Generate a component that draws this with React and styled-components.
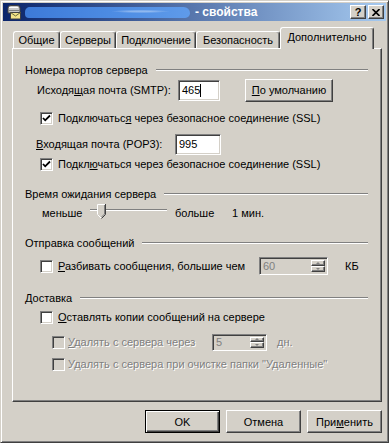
import React from 'react';
import styled, {createGlobalStyle, css} from 'styled-components';

const face = '#d4d0c8';

const Global = createGlobalStyle`
  html, body { margin: 0; padding: 0; background: ${face}; }
  body {
    font-family: "Liberation Sans", Arial, sans-serif;
    font-size: 11px;
    color: #000;
  }
`;

const raised = css`
  border: 1px solid;
  border-color: #fff #404040 #404040 #fff;
  box-shadow: inset -1px -1px #808080, inset 1px 1px ${face};
`;

const sunken = css`
  border: 1px solid;
  border-color: #808080 #fff #fff #808080;
  box-shadow: inset 1px 1px #404040, inset -1px -1px ${face};
`;

const Window = styled.div`
  width: 389px;
  height: 443px;
  box-sizing: border-box;
  background: ${face};
  border: 1px solid;
  border-color: ${face} #404040 #404040 ${face};
  box-shadow: inset 1px 1px #fff, inset -1px -1px #808080;
  padding: 2px;
  display: flex;
  flex-direction: column;
`;

const TitleBar = styled.div`
  height: 18px;
  display: flex;
  align-items: center;
  padding: 0 2px 0 3px;
  background: linear-gradient(to right, #0a246a, #a6caf0);
`;

const Smudge = styled.div`
  width: 165px;
  height: 11px;
  margin-left: 3px;
  border-radius: 6px 8px 6px 5px;
  background:
    radial-gradient(ellipse at 70% 40%, rgba(255,255,255,0.35) 0 6%, transparent 18%),
    linear-gradient(to right, #3d7ad8, #4f8ee4 60%, #5f9bea);
`;

const TitleText = styled.span`
  margin-left: 5px;
  color: #fff;
  font-weight: bold;
  font-size: 12px;
`;

const CapButtons = styled.div`
  margin-left: auto;
  display: flex;
  gap: 2px;
`;

const CapBtn = styled.div`
  ${raised};
  box-sizing: border-box;
  width: 16px;
  height: 14px;
  background: ${face};
  display: flex;
  align-items: center;
  justify-content: center;
  font-weight: bold;
  font-size: 11px;
  line-height: 1;
`;

const Body = styled.div`
  flex: 1;
  display: flex;
  flex-direction: column;
  padding: 6px 4px 0 9px;
`;

const Tabs = styled.div`
  display: flex;
  align-items: flex-end;
  height: 21px;
  padding-left: 1px;
  position: relative;
  z-index: 1;
`;

const Tab = styled.div`
  box-sizing: border-box;
  width: ${p => p.w}px;
  height: ${p => (p.$active ? 22 : 17)}px;
  margin-bottom: ${p => (p.$active ? -1 : 0)}px;
  background: ${face};
  border-top: 1px solid #fff;
  border-left: 1px solid #fff;
  border-right: 1px solid #404040;
  box-shadow: inset -1px 0 #808080;
  border-radius: 3px 3px 0 0;
  display: flex;
  justify-content: center;
  padding-top: ${p => (p.$active ? 3 : 2)}px;
`;

const Panel = styled.div`
  box-sizing: border-box;
  height: 354px;
  border: 1px solid;
  border-color: #fff #404040 #404040 #fff;
  box-shadow: inset -1px -1px #808080;
  padding: 11px 13px 0 12px;
  display: flex;
  flex-direction: column;
`;

const Row = styled.div`
  display: flex;
  align-items: center;
  height: ${p => p.h || 20}px;
  margin-top: ${p => p.mt || 0}px;
  padding-left: ${p => p.indent || 0}px;
  white-space: nowrap;
`;

const Rule = styled.div`
  flex: 1;
  margin-left: 8px;
  border-top: 1px solid #808080;
  border-bottom: 1px solid #fff;
`;

const Label = styled.span`
  display: inline-block;
  width: ${p => (p.w ? `${p.w}px` : 'auto')};
  margin-left: ${p => p.ml || 0}px;
  color: ${p => (p.$off ? '#808080' : '#000')};
  text-shadow: ${p => (p.$off ? '1px 1px #fff' : 'none')};
`;

const U = styled.u`
  text-underline-offset: 1px;
`;

const Field = styled.div`
  ${sunken};
  box-sizing: border-box;
  width: ${p => p.w}px;
  height: ${p => p.h}px;
  background: #fff;
  display: flex;
  align-items: center;
  padding-left: 3px;
`;

const Caret = styled.span`
  display: inline-block;
  width: 1px;
  height: 13px;
  background: #000;
`;

const Button = styled.div`
  box-sizing: border-box;
  width: ${p => p.w || 75}px;
  height: ${p => p.h || 23}px;
  margin-left: ${p => p.ml || 0}px;
  background: ${face};
  display: flex;
  align-items: center;
  justify-content: center;
  ${p => p.$default ? css`
    border: 1px solid #000;
    box-shadow: inset 1px 1px #fff, inset -1px -1px #404040, inset -2px -2px #808080;
  ` : raised}
`;

const Box = styled.span`
  ${sunken};
  box-sizing: border-box;
  width: 13px;
  height: 13px;
  flex: none;
  background: ${p => (p.$off ? face : '#fff')};
  display: flex;
  align-items: center;
  justify-content: center;
`;

const Spin = styled.div`
  ${sunken};
  box-sizing: border-box;
  width: ${p => p.w}px;
  height: ${p => p.h}px;
  margin-left: ${p => p.ml || 0}px;
  background: ${face};
  display: flex;
  align-items: stretch;
  padding: 2px;
  color: #808080;
`;

const SpinValue = styled.span`
  flex: 1;
  display: flex;
  align-items: center;
  padding-left: 1px;
`;

const UpDown = styled.div`
  width: 14px;
  display: flex;
  flex-direction: column;
`;

const Arrow = styled.div`
  ${raised};
  box-sizing: border-box;
  flex: 1;
  display: flex;
  align-items: center;
  justify-content: center;
  &::after {
    content: '';
    border-left: 2px solid transparent;
    border-right: 2px solid transparent;
    ${p => p.$down
      ? 'border-top: 2px solid #808080;'
      : 'border-bottom: 2px solid #808080;'}
  }
`;

const Slider = styled.div`
  position: relative;
  width: 77px;
  height: 18px;
  margin-left: ${p => p.ml || 0}px;
`;

const Track = styled.div`
  margin-top: 5px;
  height: 2px;
  border-top: 1px solid #808080;
  border-bottom: 1px solid #fff;
  background: #404040;
  box-sizing: border-box;
`;

const Thumb = styled.svg`
  position: absolute;
  left: 7px;
  top: 0;
`;

const Footer = styled.div`
  display: flex;
  justify-content: flex-end;
  gap: 6px;
  margin-top: 8px;
`;

function Check({on, off}) {
  return (
    <Box $off={off}>
      {on && (
        <svg width="9" height="9" viewBox="0 0 9 9">
          <path d="M1 4 L3.2 6.3 L8 1.5" fill="none" stroke="#000" strokeWidth="1.8" />
        </svg>
      )}
    </Box>
  );
}

function GroupTitle({children, mt}) {
  return (
    <Row mt={mt}>
      <span>{children}</span>
      <Rule />
    </Row>
  );
}

function SpinBox({value, w, h, ml}) {
  return (
    <Spin w={w} h={h} ml={ml}>
      <SpinValue>{value}</SpinValue>
      <UpDown>
        <Arrow />
        <Arrow $down />
      </UpDown>
    </Spin>
  );
}

function AppIcon() {
  return (
    <svg width="16" height="16" viewBox="0 0 16 16">
      <path d="M2 4 Q2 1.5 5 1.5 H11 Q14 1.5 14 4 V9 H2 Z" fill="#c8c8c8" stroke="#404040" />
      <path d="M3 3.5 H12" stroke="#fff" />
      <path d="M2.5 6.5 H13.5" stroke="#808080" />
      <rect x="4.5" y="8.5" width="10" height="6.5" fill="#f3e38a" stroke="#404040" />
      <path d="M4.5 8.5 L9.5 12 L14.5 8.5" fill="none" stroke="#6b6b3a" />
    </svg>
  );
}

export default function App() {
  return (
    <>
      <Global />
      <Window>
        <TitleBar>
          <AppIcon />
          <Smudge />
          <TitleText>- свойства</TitleText>
          <CapButtons>
            <CapBtn>?</CapBtn>
            <CapBtn>
              <svg width="8" height="7" viewBox="0 0 8 7">
                <path d="M0.5 0 L7.5 7 M7.5 0 L0.5 7" stroke="#000" strokeWidth="1.6" />
              </svg>
            </CapBtn>
          </CapButtons>
        </TitleBar>
        <Body>
          <Tabs>
            <Tab w={47}>Общие</Tab>
            <Tab w={56}>Серверы</Tab>
            <Tab w={80}>Подключение</Tab>
            <Tab w={84}>Безопасность</Tab>
            <Tab w={94} $active>Дополнительно</Tab>
          </Tabs>
          <Panel>
            <GroupTitle>Номера портов сервера</GroupTitle>
            <Row indent={12}>
              <Label w={141}>Исходя<U>щ</U>ая почта (SMTP):</Label>
              <Field w={42} h={21}>465<Caret /></Field>
              <Button w={88} h={23} ml={25}><span><U>П</U>о умолчанию</span></Button>
            </Row>
            <Row indent={15} mt={8}>
              <Check on />
              <Label ml={5}>Подключатьс<U>я</U> через безопасное соединение (SSL)</Label>
            </Row>
            <Row indent={11} mt={6}>
              <Label w={139}><U>В</U>ходящая почта (POP3):</Label>
              <Field w={46} h={21}>995</Field>
            </Row>
            <Row indent={15}>
              <Check on />
              <Label ml={5}>Подкл<U>ю</U>чаться через безопасное соединение (SSL)</Label>
            </Row>

            <GroupTitle mt={10}>Время ожидания сервера</GroupTitle>
            <Row indent={17} h={18}>
              <Label w={48}>меньше</Label>
              <Slider>
                <Track />
                <Thumb width="9" height="15" viewBox="0 0 9 15">
                  <path d="M0 0 H8 V10 L4 14 L0 10 Z" fill={face} />
                  <path d="M0.5 10.5 V0.5 H8" fill="none" stroke="#fff" />
                  <path d="M8.5 0 V10.5 L4.5 14.5" fill="none" stroke="#404040" />
                  <path d="M7.5 1 V10 L4.5 13" fill="none" stroke="#808080" />
                  <path d="M0.7 10.7 L4 14" fill="none" stroke="#fff" />
                </Thumb>
              </Slider>
              <Label w={57} ml={8}>больше</Label>
              <Label>1 мин.</Label>
            </Row>

            <GroupTitle mt={11}>Отправка сообщений</GroupTitle>
            <Row indent={15} mt={3}>
              <Check />
              <Label ml={5} w={201}><U>Р</U>азбивать сообщения, большие чем</Label>
              <SpinBox value="60" w={69} h={18} />
              <Label ml={17}>КБ</Label>
            </Row>

            <GroupTitle mt={12}>Доставка</GroupTitle>
            <Row indent={15} h={18}>
              <Check />
              <Label ml={5}><U>О</U>ставлять копии сообщений на сервере</Label>
            </Row>
            <Row indent={27} mt={6}>
              <Check off />
              <Label ml={3} w={144} $off><U>У</U>далять с сервера через</Label>
              <SpinBox value="5" w={55} h={17} />
              <Label ml={10} $off>дн.</Label>
            </Row>
            <Row indent={27} mt={2}>
              <Check off />
              <Label ml={3} $off>У<U>д</U>алять с сервера при очистке папки "Удаленные"</Label>
            </Row>
          </Panel>
          <Footer>
            <Button $default>OK</Button>
            <Button>Отмена</Button>
            <Button><span>При<U>м</U>енить</span></Button>
          </Footer>
        </Body>
      </Window>
    </>
  );
}
